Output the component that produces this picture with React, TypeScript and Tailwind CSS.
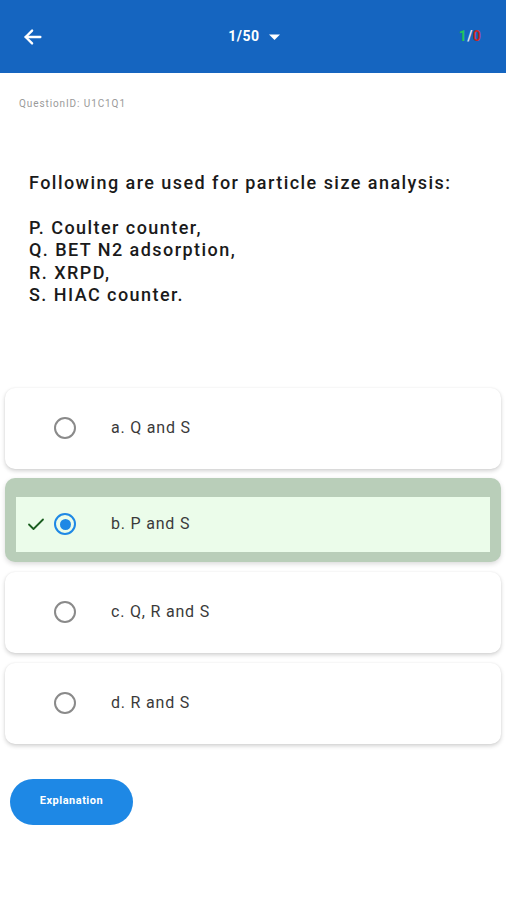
import React from "react";

function Radio({ checked }: { checked?: boolean }) {
  return checked ? (
    <div className="w-[22px] h-[22px] rounded-full border-2 border-[#1e88e5] flex items-center justify-center">
      <div className="w-[11px] h-[11px] rounded-full bg-[#1e88e5]" />
    </div>
  ) : (
    <div className="w-[22px] h-[22px] rounded-full border-2 border-[#8a8a8a]" />
  );
}

function Option({ label }: { label: string }) {
  return (
    <div className="mx-[5px] h-[81px] bg-white rounded-[10px] shadow-[0_2px_4px_rgba(0,0,0,0.18),0_0_2px_rgba(0,0,0,0.06)] flex items-center">
      <div className="w-[49px]" />
      <Radio />
      <div className="w-[35px]" />
      <span className="text-[16px] text-[#3a3a3a] tracking-[0.8px]">{label}</span>
    </div>
  );
}

export default function App() {
  return (
    <div className="w-[506px] h-[900px] bg-white" style={{ fontFamily: "Roboto, 'Noto Sans', sans-serif" }}>
      <div className="h-[73px] bg-[#1565c0] flex items-center px-[22px] relative">
        <svg width="22" height="22" viewBox="0 0 24 24" fill="none" stroke="white" strokeWidth="2.6" strokeLinecap="round" strokeLinejoin="round">
          <path d="M20 12H4" />
          <path d="M11 5l-7 7 7 7" />
        </svg>
        <div className="flex-1 flex justify-center items-center gap-[8px] pl-[6px]">
          <span className="text-white font-bold text-[14px] tracking-[0.5px]">1/50</span>
          <svg width="13" height="8" viewBox="0 0 13 8"><path d="M1 1.5h11L6.5 7z" fill="white" /></svg>
        </div>
        <div className="text-[14px] font-bold pr-[3px] tracking-[0.3px]">
          <span className="text-[#22c55e]">1</span>
          <span className="text-[#e3e7f0]">/</span>
          <span className="text-[#c62828]">0</span>
        </div>
      </div>
      <div className="px-[19px] pt-[23px] text-[10px] text-[#9a9a9a] tracking-[0.9px]">QuestionID: U1C1Q1</div>
      <div className="px-[29px] pt-[61px] text-[18px] font-medium text-[#1a1a1a] leading-[22.5px] tracking-[1.45px]">
        <div>Following are used for particle size analysis:</div>
        <div className="h-[22px]" />
        <div>P. Coulter counter,</div>
        <div>Q. BET N2 adsorption,</div>
        <div>R. XRPD,</div>
        <div>S. HIAC counter.</div>
      </div>
      <div className="mt-[81px] flex flex-col gap-[10px]">
        <Option label="a. Q and S" />
        <div className="mx-[5px] -mt-[1px] h-[84px] rounded-[10px] bg-[#b9ceb9] pt-[19px] pb-[10px] px-[11px] shadow-[0_2px_5px_rgba(0,0,0,0.15)]">
          <div className="h-full bg-[#ebfcea] flex items-center">
            <div className="w-[11px]" />
            <svg width="18" height="14" viewBox="0 0 18 14" fill="none" stroke="#1b5e20" strokeWidth="1.8" strokeLinecap="round" strokeLinejoin="round">
              <path d="M2 7.5l4.5 4.5L16 2.5" />
            </svg>
            <div className="w-[9px]" />
            <Radio checked />
            <div className="w-[35px]" />
            <span className="text-[16px] text-[#3a3a3a] tracking-[0.8px]">b. P and S</span>
          </div>
        </div>
        <Option label="c. Q, R and S" />
        <Option label="d. R and S" />
      </div>
      <div className="px-[10px] mt-[35px]">
        <button className="w-[123px] h-[46px] rounded-full bg-[#1e88e5] text-white text-[11px] font-bold tracking-[0.5px]">Explanation</button>
      </div>
    </div>
  );
}
